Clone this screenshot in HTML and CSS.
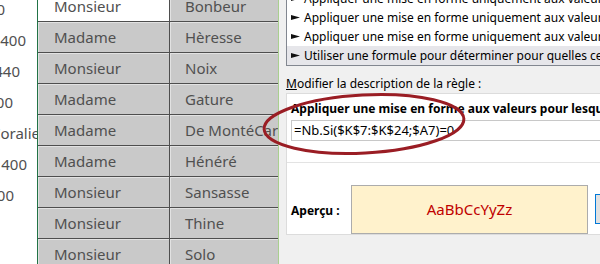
FILE: index.html
```html
<!DOCTYPE html>
<html lang="fr">
  <head>
    <meta charset="UTF-8" />
    <title>Mise en forme conditionnelle</title>
    <link rel="stylesheet" href="styles.css">
  </head>
  <body>
    <div class="screen">
      <!-- Feuille Excel à gauche -->
      <div class="sheet">
        <div class="nums">
          <div class="num p32">1 500</div>
          <div class="num p11">2 400</div>
          <div class="num p17">1 440</div>
          <div class="num p24">900</div>
          <div class="num left">Coraliea</div>
          <div class="num p10">2 400</div>
          <div class="num p23">800</div>
          <div class="num"></div>
          <div class="num"></div>
        </div>
        <div class="cells">
          <div class="cell civ current">Monsieur</div><div class="cell name">Bonbeur</div>
          <div class="cell civ">Madame</div><div class="cell name">Hèresse</div>
          <div class="cell civ">Monsieur</div><div class="cell name">Noix</div>
          <div class="cell civ">Madame</div><div class="cell name">Gature</div>
          <div class="cell civ">Madame</div><div class="cell name">De MontéCarlo</div>
          <div class="cell civ">Madame</div><div class="cell name">Hénéré</div>
          <div class="cell civ">Monsieur</div><div class="cell name">Sansasse</div>
          <div class="cell civ">Monsieur</div><div class="cell name">Thine</div>
          <div class="cell civ">Monsieur</div><div class="cell name">Solo</div>
        </div>
      </div>

      <!-- Boîte de dialogue de la règle -->
      <div class="dialog">
        <ul class="rules">
          <li><svg class="arrow" width="9" height="5" viewBox="0 0 9 5"><polygon points="0,0 9,2.5 0,5" /></svg>Appliquer une mise en forme uniquement aux valeurs situées</li>
          <li><svg class="arrow" width="9" height="5" viewBox="0 0 9 5"><polygon points="0,0 9,2.5 0,5" /></svg>Appliquer une mise en forme uniquement aux valeurs au-dessus</li>
          <li><svg class="arrow" width="9" height="5" viewBox="0 0 9 5"><polygon points="0,0 9,2.5 0,5" /></svg>Appliquer une mise en forme uniquement aux valeurs uniques</li>
          <li class="selected"><svg class="arrow" width="9" height="5" viewBox="0 0 9 5"><polygon points="0,0 9,2.5 0,5" /></svg>Utiliser une formule pour déterminer pour quelles cellules</li>
        </ul>
        <p class="label"><u>M</u>odifier la description de la règle :</p>
        <div class="desc">
          <div class="desc-top">
            <p class="desc-title">Appliquer une mise en forme aux valeurs pour lesquelles cette formule est vraie :</p>
            <div class="formula">=Nb.Si($K$7:$K$24;$A7)=0</div>
          </div>
          <div class="preview-row">
            <span class="preview-label">Aperçu :</span>
            <div class="preview">AaBbCcYyZz</div>
            <button class="format-btn">Format...</button>
          </div>
        </div>
      </div>

      <!-- Cercle rouge dessiné par-dessus -->
      <svg class="circle" width="600" height="264" viewBox="0 0 600 264">
        <ellipse cx="364" cy="124" rx="100" ry="29" transform="rotate(-3 364 124)" />
      </svg>
    </div>
  </body>
</html>
```

FILE: styles.css
```css
/* Page */
body {
  margin: 0;
  width: 600px;
  height: 264px;
  overflow: hidden;
  background-color: #f0f0f0;
  font-family: "Noto Sans", "Open Sans", sans-serif;
}

.screen {
  position: relative;
  display: flex;
  width: 600px;
  height: 264px;
  overflow: hidden;
}

/* Feuille Excel */
.sheet {
  display: flex;
  flex: none;
  margin-top: -9px;
  border-right: 1px solid #a9cf8f;
  font-size: 15px;
  color: #505050;
}

.nums {
  width: 37px;
  padding-top: 3px;
  background-color: #fff;
  border-right: 1px solid #217346;
  overflow: hidden;
}

.num {
  display: flex;
  justify-content: flex-end;
  height: 31px;
  line-height: 31px;
  white-space: nowrap;
}

.num.left {
  justify-content: flex-start;
  margin-left: -9px;
}

.p10 { padding-right: 10px; }
.p11 { padding-right: 11px; }
.p17 { padding-right: 17px; }
.p23 { padding-right: 23px; }
.p24 { padding-right: 24px; }
.p32 { padding-right: 32px; }

.cells {
  display: grid;
  grid-template-columns: 132px 108px;
  grid-auto-rows: 31px;
}

.cell {
  box-sizing: border-box;
  padding-left: 15px;
  line-height: 30px;
  white-space: nowrap;
  overflow: hidden;
  background-color: #c9c9c9;
  border-bottom: 1px solid #4e4e4e;
  box-shadow: inset 1px 1px 0 #e2e2e2;
}

.civ {
  padding-left: 16px;
  border-right: 1px solid #4e4e4e;
}

.civ.current {
  background-color: #fff;
  box-shadow: none;
}

/* Boîte de dialogue */
.dialog {
  flex: 0 0 320px;
  padding-left: 7px;
  font-size: 12px;
  color: #000;
}

.rules {
  list-style-type: none;
  margin: -12px 0 0 0;
  padding: 0;
  width: 330px;
  background-color: #fff;
  border: 1px solid #828790;
  border-right: none;
}

.rules li {
  display: flex;
  align-items: center;
  gap: 4px;
  height: 19px;
  padding-left: 4px;
  white-space: nowrap;
}

.rules li.selected {
  background-color: #e6e6ea;
}

.arrow {
  flex: none;
  fill: #111;
}

.label {
  margin: 9px 0 0 0;
  line-height: 18px;
}

.desc {
  width: 330px;
  background-color: #fff;
  border: 1px solid #dcdcdc;
  border-right: none;
}

.desc-top {
  height: 63px;
  padding: 5px 0 0 4px;
  border-bottom: 1px solid #e3e3e3;
}

.desc-title {
  margin: 0;
  font-weight: bold;
  line-height: 19px;
  white-space: nowrap;
}

.formula {
  margin-top: 2px;
  height: 19px;
  line-height: 19px;
  padding-left: 2px;
  font-size: 13px;
  white-space: nowrap;
  border: 1px solid #c8c8c8;
  border-right: none;
}

.preview-row {
  display: flex;
  align-items: center;
  height: 50px;
  padding: 21px 0 0 4px;
}

.preview-label {
  flex: none;
  width: 60px;
  margin-top: 3px;
  font-weight: bold;
  white-space: nowrap;
}

.preview {
  flex: none;
  box-sizing: border-box;
  width: 237px;
  height: 49px;
  line-height: 47px;
  text-align: center;
  font-size: 15px;
  color: #c00000;
  background-color: #fff2cc;
  border: 1px solid #acacac;
}

.format-btn {
  flex: none;
  margin-left: 7px;
  height: 30px;
  width: 90px;
  background-color: #e1e1e1;
  border: 1px solid #0078d7;
  font-family: inherit;
  font-size: 12px;
}

/* Cercle rouge */
.circle {
  position: absolute;
  top: 0;
  left: 0;
  pointer-events: none;
}

.circle ellipse {
  fill: none;
  stroke: #9a1d24;
  stroke-width: 3;
}
```
